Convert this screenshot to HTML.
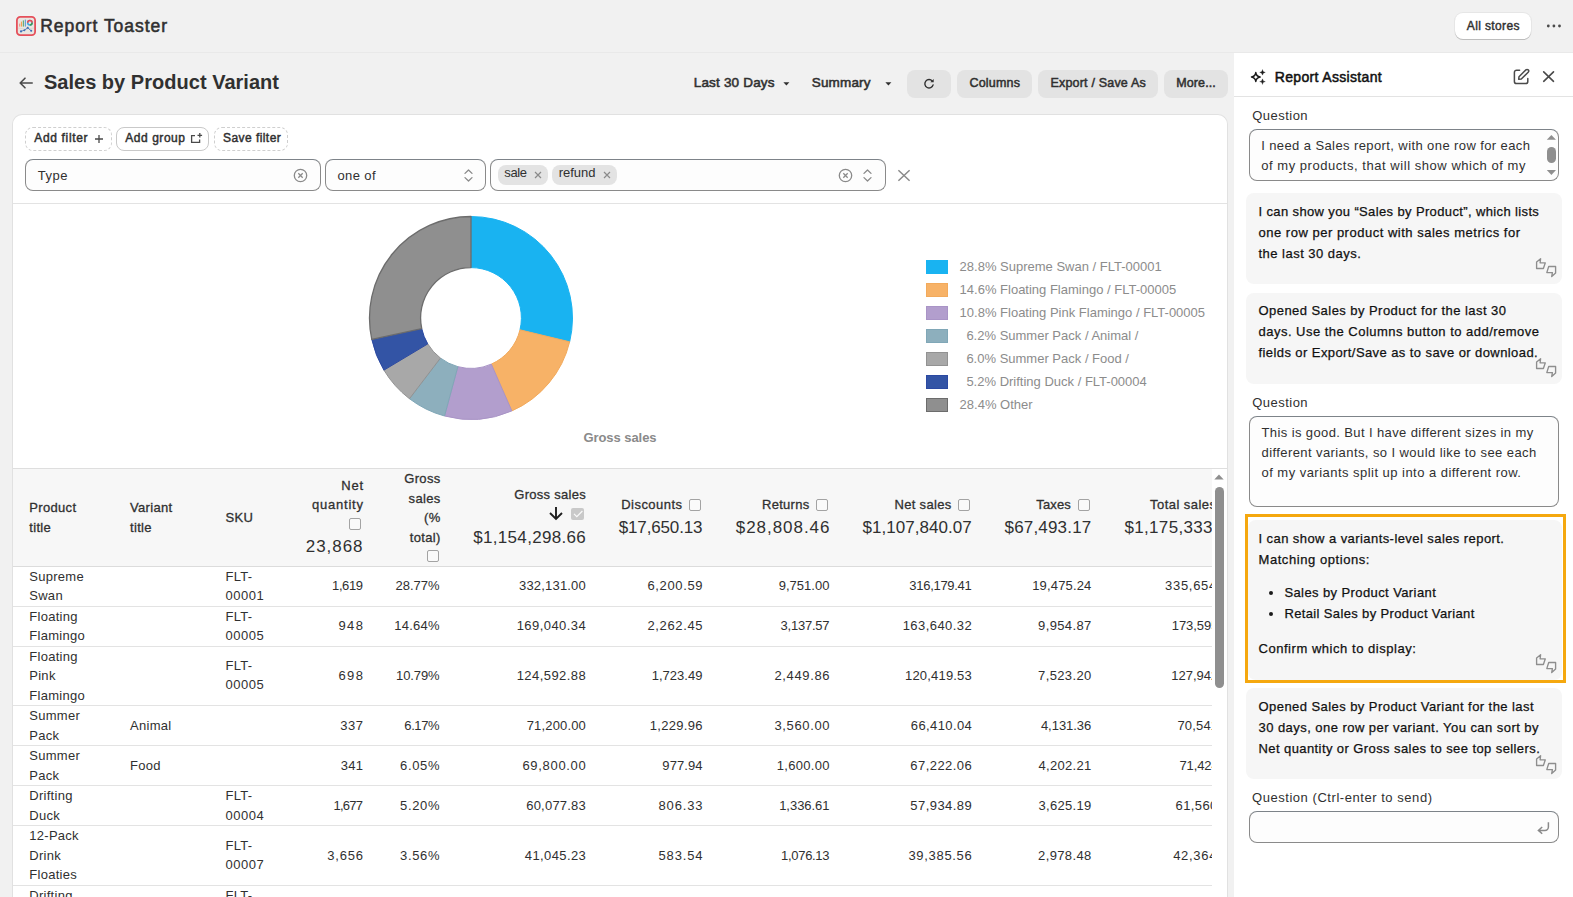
<!DOCTYPE html>
<html><head><meta charset="utf-8"><title>Report Toaster</title><style>
html,body{margin:0;padding:0;}
html{width:1573px;height:897px;overflow:hidden;}
body{width:1573px;height:897px;overflow:hidden;background:#f1f1f1;position:relative;font-family:"Liberation Sans", sans-serif;color:#303030;}
div,span,svg{position:absolute;box-sizing:border-box;}
span{white-space:pre;}
</style></head>
<body>
<div style="left:0px;top:52px;width:1573px;height:1px;background:#e9e9e9;"></div>
<svg style="left:16px;top:16px;" width="20" height="20" viewBox="0 0 20 20">
<rect x="0.9" y="0.9" width="18.2" height="18.2" rx="3.4" fill="#e9e6e1" stroke="#e5505b" stroke-width="1.8"/><path d="M2 12 Q10 14.5 18 12" fill="none" stroke="#d8d4ce" stroke-width="0.8"/>
<rect x="3.2" y="7.6" width="1" height="3" fill="#f08a80"/>
<rect x="4.9" y="5.6" width="1.1" height="5" fill="#f3a24f"/>
<rect x="6.8" y="4.4" width="1.1" height="6.2" fill="#5aa66b"/>
<rect x="8.8" y="3.6" width="1.1" height="7" fill="#5c9bd8"/>
<circle cx="13.9" cy="6.7" r="2.2" fill="none" stroke="#3aa6dd" stroke-width="1.5"/>
<path d="M11.7 6.7 A2.2 2.2 0 0 1 16.1 6.7" fill="none" stroke="#ec4b52" stroke-width="1.5"/>
<path d="M16.1 6.7 A2.2 2.2 0 0 1 13.9 8.9" fill="none" stroke="#3c9a55" stroke-width="1.5"/>
<path d="M5 15.4 L8.4 14.2 L11.7 11.8 L15.2 14.8" fill="none" stroke="#4a78b8" stroke-width="0.9"/>
<circle cx="5" cy="15.4" r="1.05" fill="#3f6fb5"/><circle cx="8.4" cy="14.2" r="0.95" fill="#3f6fb5"/>
<circle cx="11.7" cy="11.8" r="1.05" fill="#3f6fb5"/><circle cx="15.2" cy="14.8" r="1.05" fill="#3f6fb5"/>
</svg>
<span style="left:40.20px;top:16px;font-size:17.5px;line-height:20px;letter-spacing:0.949px;-webkit-text-stroke:0.55px;">Report Toaster</span>
<div style="left:1455px;top:13px;width:76px;height:26px;background:#fff;border-radius:8px;box-shadow:0 1px 0 #bdbdbd, 0 0 0 1px #e6e6e6;"></div>
<span style="left:1466.80px;top:19px;font-size:12px;line-height:14px;letter-spacing:0.371px;-webkit-text-stroke:0.42px;">All stores</span>
<svg style="left:1546.3px;top:23px;" width="17" height="6" viewBox="0 0 17 6"><circle cx="2.3" cy="3" r="1.4" fill="#4a4a4a"/><circle cx="7.9" cy="3" r="1.4" fill="#4a4a4a"/><circle cx="13.5" cy="3" r="1.4" fill="#4a4a4a"/></svg>
<svg style="left:18px;top:76px;" width="16" height="14" viewBox="0 0 16 14"><path d="M14.2 7 H2.4 M7 2.2 L2.2 7 L7 11.8" fill="none" stroke="#4a4a4a" stroke-width="1.6" stroke-linecap="round" stroke-linejoin="round"/></svg>
<span style="left:43.90px;top:71px;font-size:20px;line-height:22px;letter-spacing:0.025px;font-weight:bold;">Sales by Product Variant</span>
<span style="left:693.75px;top:75px;font-size:13.5px;line-height:15px;letter-spacing:0.178px;-webkit-text-stroke:0.55px;">Last 30 Days</span>
<svg style="left:783px;top:82px;" width="7" height="4" viewBox="0 0 7 4"><path d="M0.4 0.3 H6.4 L3.4 3.6 Z" fill="#303030"/></svg>
<span style="left:811.75px;top:75px;font-size:13.5px;line-height:15px;letter-spacing:0.164px;-webkit-text-stroke:0.55px;">Summary</span>
<svg style="left:885px;top:82px;" width="7" height="4" viewBox="0 0 7 4"><path d="M0.4 0.3 H6.4 L3.4 3.6 Z" fill="#303030"/></svg>
<div style="left:907px;top:70px;width:44px;height:28px;background:#e3e3e3;border-radius:8px;"></div>
<svg style="left:922px;top:77px;" width="14" height="14" viewBox="0 0 14 14"><path d="M10.3 4.1 A4.2 4.2 0 1 0 11.1 7.9" fill="none" stroke="#303030" stroke-width="1.4" stroke-linecap="round"/><path d="M11.7 1.9 V5.3 H8.3 Z" fill="#303030"/></svg>
<div style="left:957px;top:70px;width:75px;height:28px;background:#e3e3e3;border-radius:8px;"></div>
<span style="left:969.50px;top:76px;font-size:12.5px;line-height:14px;letter-spacing:0.195px;-webkit-text-stroke:0.5px;">Columns</span>
<div style="left:1038px;top:70px;width:120px;height:28px;background:#e3e3e3;border-radius:8px;"></div>
<span style="left:1050.50px;top:76px;font-size:12.5px;line-height:14px;letter-spacing:0.189px;-webkit-text-stroke:0.5px;">Export / Save As</span>
<div style="left:1164px;top:70px;width:64px;height:28px;background:#e3e3e3;border-radius:8px;"></div>
<span style="left:1176.25px;top:76px;font-size:12.5px;line-height:14px;letter-spacing:0.099px;-webkit-text-stroke:0.5px;">More...</span>
<div style="left:12px;top:114px;width:1216px;height:783px;background:#fff;border:1px solid #e1e1e1;border-bottom:none;border-radius:10px 10px 0 0;"></div>
<div style="left:25px;top:127px;width:87px;height:24px;border:1px dashed #cfcfcf;border-radius:8px;"></div>
<span style="left:34.30px;top:131px;font-size:12px;line-height:14px;letter-spacing:0.649px;-webkit-text-stroke:0.45px;">Add filter</span>
<svg style="left:94px;top:134px;" width="10" height="10" viewBox="0 0 10 10"><path d="M5 1 V9 M1 5 H9" stroke="#4a4a4a" stroke-width="1.3" fill="none"/></svg>
<div style="left:116px;top:127px;width:93px;height:24px;border:1px solid #c9c9c9;border-radius:8px;background:#fff;"></div>
<span style="left:125.30px;top:131px;font-size:12px;line-height:14px;letter-spacing:0.539px;-webkit-text-stroke:0.45px;">Add group</span>
<svg style="left:190px;top:132px;" width="13" height="12" viewBox="0 0 13 12"><path d="M5 3.6 H1.6 V10.4 H9.6 V7.6" fill="none" stroke="#4a4a4a" stroke-width="1.3"/><path d="M9.8 1 V5.6 M7.5 3.3 H12.1" stroke="#4a4a4a" stroke-width="1.3" fill="none"/></svg>
<div style="left:214px;top:127px;width:74px;height:24px;border:1px dashed #cfcfcf;border-radius:8px;"></div>
<span style="left:223.00px;top:131px;font-size:12px;line-height:14px;letter-spacing:0.439px;-webkit-text-stroke:0.45px;">Save filter</span>
<div style="left:25px;top:159px;width:296px;height:32px;background:#fdfdfd;border:1px solid #8a8a8a;border-top-color:#7d8389;border-radius:8px;"></div>
<span style="left:37.80px;top:168px;font-size:13px;line-height:15px;letter-spacing:0.471px;">Type</span>
<svg style="left:293px;top:168px;" width="15" height="15" viewBox="0 0 15 15"><circle cx="7.5" cy="7.5" r="6.2" fill="none" stroke="#8a8a8a" stroke-width="1.3"/><path d="M5.3 5.3 L9.7 9.7 M9.7 5.3 L5.3 9.7" stroke="#8a8a8a" stroke-width="1.3" fill="none"/></svg>
<div style="left:325px;top:159px;width:161px;height:32px;background:#fdfdfd;border:1px solid #8a8a8a;border-top-color:#7d8389;border-radius:8px;"></div>
<span style="left:337.50px;top:168px;font-size:13px;line-height:15px;letter-spacing:0.389px;">one of</span>
<svg style="left:463.5px;top:168.7px;" width="9" height="13" viewBox="0 0 9 13"><path d="M1 4.4 L4.5 1 L8 4.4 M1 8.6 L4.5 12 L8 8.6" fill="none" stroke="#8a8a8a" stroke-width="1.3" stroke-linejoin="round" stroke-linecap="round"/></svg>
<div style="left:490px;top:159px;width:396px;height:32px;background:#fdfdfd;border:1px solid #8a8a8a;border-top-color:#7d8389;border-radius:8px;"></div>
<div style="left:498px;top:165px;width:50px;height:20px;background:#e3e3e3;border-radius:8px;"></div>
<span style="left:504.30px;top:165px;font-size:13px;line-height:15px;letter-spacing:-0.386px;">sale</span>
<svg style="left:534.2px;top:171.2px;" width="8" height="8" viewBox="0 0 8 8"><path d="M1 1 L7 7 M7 1 L1 7" stroke="#8a8a8a" stroke-width="1.2" fill="none"/></svg>
<div style="left:552px;top:165px;width:65px;height:20px;background:#e3e3e3;border-radius:8px;"></div>
<span style="left:558.70px;top:165px;font-size:13px;line-height:15px;letter-spacing:-0.035px;">refund</span>
<svg style="left:603px;top:171.2px;" width="8" height="8" viewBox="0 0 8 8"><path d="M1 1 L7 7 M7 1 L1 7" stroke="#8a8a8a" stroke-width="1.2" fill="none"/></svg>
<svg style="left:838px;top:168px;" width="15" height="15" viewBox="0 0 15 15"><circle cx="7.5" cy="7.5" r="6.2" fill="none" stroke="#8a8a8a" stroke-width="1.3"/><path d="M5.3 5.3 L9.7 9.7 M9.7 5.3 L5.3 9.7" stroke="#8a8a8a" stroke-width="1.3" fill="none"/></svg>
<svg style="left:863.4px;top:168.7px;" width="9" height="13" viewBox="0 0 9 13"><path d="M1 4.4 L4.5 1 L8 4.4 M1 8.6 L4.5 12 L8 8.6" fill="none" stroke="#8a8a8a" stroke-width="1.3" stroke-linejoin="round" stroke-linecap="round"/></svg>
<svg style="left:897px;top:169px;" width="14" height="13" viewBox="0 0 14 13"><path d="M1.4 1.2 L12.6 11.8 M12.6 1.2 L1.4 11.8" stroke="#8a8a8a" stroke-width="1.5" fill="none"/></svg>
<div style="left:13px;top:203px;width:1214px;height:1px;background:#e3e3e3;"></div>
<div style="left:1234px;top:53px;width:339px;height:844px;background:#fff;"></div>
<div style="left:1234px;top:96px;width:339px;height:1px;background:#e3e3e3;"></div>
<svg style="left:360px;top:208px;" width="222" height="222" viewBox="0 0 222 222"><path d="M111.00 8.50 A101.5 101.5 0 0 1 209.67 133.82 L159.99 121.83 A50.4 50.4 0 0 0 111.00 59.60 Z" fill="#19b3f1" stroke="#19b3f1" stroke-width="1" stroke-linejoin="round"/><path d="M209.67 133.82 A101.5 101.5 0 0 1 151.84 202.92 L131.28 156.14 A50.4 50.4 0 0 0 159.99 121.83 Z" fill="#f7b267" stroke="#f2aa5c" stroke-width="1" stroke-linejoin="round"/><path d="M151.84 202.92 A101.5 101.5 0 0 1 84.52 207.99 L97.85 158.66 A50.4 50.4 0 0 0 131.28 156.14 Z" fill="#b29ecd" stroke="#a994c6" stroke-width="1" stroke-linejoin="round"/><path d="M84.52 207.99 A101.5 101.5 0 0 1 49.45 190.71 L80.44 150.07 A50.4 50.4 0 0 0 97.85 158.66 Z" fill="#8dafbd" stroke="#80a7b7" stroke-width="1" stroke-linejoin="round"/><path d="M49.45 190.71 A101.5 101.5 0 0 1 23.90 162.11 L67.75 135.87 A50.4 50.4 0 0 0 80.44 150.07 Z" fill="#a8a8a8" stroke="#929292" stroke-width="1" stroke-linejoin="round"/><path d="M23.90 162.11 A101.5 101.5 0 0 1 11.78 131.39 L61.73 120.62 A50.4 50.4 0 0 0 67.75 135.87 Z" fill="#3354a5" stroke="#2b49a2" stroke-width="1" stroke-linejoin="round"/><path d="M11.78 131.39 A101.5 101.5 0 0 1 111.00 8.50 L111.00 59.60 A50.4 50.4 0 0 0 61.73 120.62 Z" fill="#8f8f8f" stroke="#6c6c6c" stroke-width="1.3" stroke-linejoin="round"/></svg>
<span style="left:583.40px;top:430px;font-size:13px;line-height:15px;letter-spacing:-0.052px;font-weight:bold;color:#8a8a8a;">Gross sales</span>
<div style="left:925.5px;top:259.5px;width:22px;height:14.5px;background:#19b3f1;border:1px solid #19b3f1;"></div>
<span style="left:959.60px;top:259px;font-size:13px;line-height:15px;color:#8c8c8c;">28.8% Supreme Swan / FLT-00001</span>
<div style="left:925.5px;top:282.5px;width:22px;height:14.5px;background:#f7b267;border:1px solid #f2aa5c;"></div>
<span style="left:959.60px;top:282px;font-size:13px;line-height:15px;color:#8c8c8c;">14.6% Floating Flamingo / FLT-00005</span>
<div style="left:925.5px;top:305.5px;width:22px;height:14.5px;background:#b29ecd;border:1px solid #a994c6;"></div>
<span style="left:959.60px;top:305px;font-size:13px;line-height:15px;color:#8c8c8c;">10.8% Floating Pink Flamingo / FLT-00005</span>
<div style="left:925.5px;top:328.5px;width:22px;height:14.5px;background:#8dafbd;border:1px solid #80a7b7;"></div>
<span style="left:966.40px;top:328px;font-size:13px;line-height:15px;color:#8c8c8c;">6.2% Summer Pack / Animal /</span>
<div style="left:925.5px;top:351.5px;width:22px;height:14.5px;background:#a8a8a8;border:1px solid #929292;"></div>
<span style="left:966.40px;top:351px;font-size:13px;line-height:15px;color:#8c8c8c;">6.0% Summer Pack / Food /</span>
<div style="left:925.5px;top:374.5px;width:22px;height:14.5px;background:#3354a5;border:1px solid #2b49a2;"></div>
<span style="left:966.40px;top:374px;font-size:13px;line-height:15px;color:#8c8c8c;">5.2% Drifting Duck / FLT-00004</span>
<div style="left:925.5px;top:397.5px;width:22px;height:14.5px;background:#8f8f8f;border:1px solid #6c6c6c;"></div>
<span style="left:959.60px;top:397px;font-size:13px;line-height:15px;color:#8c8c8c;">28.4% Other</span>
<div style="left:13px;top:468px;width:1199px;height:429px;overflow:hidden;">
<div style="left:0px;top:0px;width:1300px;height:1px;background:#dedede;"></div>
<div style="left:0px;top:1px;width:1300px;height:97px;background:#f7f7f7;"></div>
<div style="left:0px;top:98px;width:1300px;height:1px;background:#dcdcdc;"></div>
<span style="left:16.25px;top:32px;font-size:13px;line-height:15px;letter-spacing:0.330px;-webkit-text-stroke:0.3px;">Product</span>
<span style="left:16.25px;top:52px;font-size:13px;line-height:15px;letter-spacing:0.330px;-webkit-text-stroke:0.3px;">title</span>
<span style="left:117.00px;top:32px;font-size:13px;line-height:15px;letter-spacing:0.330px;-webkit-text-stroke:0.3px;">Variant</span>
<span style="left:117.00px;top:52px;font-size:13px;line-height:15px;letter-spacing:0.330px;-webkit-text-stroke:0.3px;">title</span>
<span style="left:212.50px;top:42px;font-size:13px;line-height:15px;letter-spacing:0.300px;-webkit-text-stroke:0.3px;">SKU</span>
<span style="left:328.25px;top:10px;font-size:13px;line-height:15px;letter-spacing:0.758px;-webkit-text-stroke:0.3px;">Net</span>
<span style="left:299.00px;top:29px;font-size:13px;line-height:15px;letter-spacing:0.779px;-webkit-text-stroke:0.3px;">quantity</span>
<div style="left:336.25px;top:50px;width:12px;height:12px;border:1px solid #a3a3a3;border-radius:2px;background:#fafafa;"></div>
<span style="left:292.75px;top:69px;font-size:17px;line-height:19px;letter-spacing:0.950px;">23,868</span>
<span style="left:391.26px;top:3px;font-size:13px;line-height:15px;letter-spacing:0.330px;-webkit-text-stroke:0.3px;">Gross</span>
<span style="left:395.57px;top:23px;font-size:13px;line-height:15px;letter-spacing:0.330px;-webkit-text-stroke:0.3px;">sales</span>
<span style="left:411.03px;top:42px;font-size:13px;line-height:15px;letter-spacing:0.330px;-webkit-text-stroke:0.3px;">(%</span>
<span style="left:396.69px;top:62px;font-size:13px;line-height:15px;letter-spacing:0.330px;-webkit-text-stroke:0.3px;">total)</span>
<div style="left:413.5px;top:82.20000000000005px;width:12px;height:12px;border:1px solid #a3a3a3;border-radius:2px;background:#fafafa;"></div>
<span style="left:501.25px;top:19px;font-size:13px;line-height:15px;letter-spacing:0.286px;-webkit-text-stroke:0.3px;">Gross sales</span>
<svg style="left:535px;top:37px;" width="16" height="16" viewBox="0 0 16 16"><path d="M8 2.1 V13.6 M2 8 L8 14 L14 8" fill="none" stroke="#1f1f1f" stroke-width="1.9" stroke-linejoin="miter"/></svg>
<div style="left:558.2px;top:40px;width:12.5px;height:12px;background:#c9c9c9;border-radius:2px;"></div>
<svg style="left:558.5px;top:40px;" width="12" height="12" viewBox="0 0 12 12"><path d="M2 5.8 L4.8 8.6 L10.4 3" fill="none" stroke="#fafafa" stroke-width="1.2"/></svg>
<span style="left:460.25px;top:60px;font-size:17px;line-height:19px;letter-spacing:0.315px;">$1,154,298.66</span>
<span style="left:608.25px;top:29px;font-size:13px;line-height:15px;letter-spacing:0.459px;-webkit-text-stroke:0.3px;">Discounts</span>
<div style="left:676.25px;top:31px;width:12px;height:12px;border:1px solid #a3a3a3;border-radius:2px;background:#fafafa;"></div>
<span style="left:605.75px;top:50px;font-size:17px;line-height:19px;letter-spacing:-0.149px;">$17,650.13</span>
<span style="left:749.00px;top:29px;font-size:13px;line-height:15px;letter-spacing:0.286px;-webkit-text-stroke:0.3px;">Returns</span>
<div style="left:803.25px;top:31px;width:12px;height:12px;border:1px solid #a3a3a3;border-radius:2px;background:#fafafa;"></div>
<span style="left:722.75px;top:50px;font-size:17px;line-height:19px;letter-spacing:0.962px;">$28,808.46</span>
<span style="left:881.50px;top:29px;font-size:13px;line-height:15px;letter-spacing:0.318px;-webkit-text-stroke:0.3px;">Net sales</span>
<div style="left:945px;top:31px;width:12px;height:12px;border:1px solid #a3a3a3;border-radius:2px;background:#fafafa;"></div>
<span style="left:849.50px;top:50px;font-size:17px;line-height:19px;letter-spacing:0.044px;">$1,107,840.07</span>
<span style="left:1023.25px;top:29px;font-size:13px;line-height:15px;letter-spacing:0.133px;-webkit-text-stroke:0.3px;">Taxes</span>
<div style="left:1064.5px;top:31px;width:12px;height:12px;border:1px solid #a3a3a3;border-radius:2px;background:#fafafa;"></div>
<span style="left:991.50px;top:50px;font-size:17px;line-height:19px;letter-spacing:0.184px;">$67,493.17</span>
<span style="left:1137.10px;top:29px;font-size:13px;line-height:15px;letter-spacing:0.450px;-webkit-text-stroke:0.3px;">Total sales</span>
<div style="left:1211.5px;top:31px;width:12px;height:12px;border:1px solid #a3a3a3;border-radius:2px;background:#fafafa;"></div>
<span style="left:1111.50px;top:50px;font-size:17px;line-height:19px;letter-spacing:0.320px;">$1,175,333.24</span>
<span style="left:16.25px;top:101px;font-size:13px;line-height:15px;letter-spacing:0.280px;">Supreme</span>
<span style="left:16.25px;top:120px;font-size:13px;line-height:15px;letter-spacing:0.280px;">Swan</span>
<span style="left:212.50px;top:101px;font-size:13px;line-height:15px;letter-spacing:0.280px;">FLT-</span>
<span style="left:212.50px;top:120px;font-size:13px;line-height:15px;letter-spacing:0.550px;">00001</span>
<span style="left:319.05px;top:110px;font-size:13px;line-height:15px;letter-spacing:-0.399px;">1,619</span>
<span style="left:382.60px;top:110px;font-size:13px;line-height:15px;letter-spacing:-0.019px;">28.77%</span>
<span style="left:506.05px;top:110px;font-size:13px;line-height:15px;letter-spacing:0.180px;">332,131.00</span>
<span style="left:634.40px;top:110px;font-size:13px;line-height:15px;letter-spacing:0.642px;">6,200.59</span>
<span style="left:765.70px;top:110px;font-size:13px;line-height:15px;letter-spacing:0.027px;">9,751.00</span>
<span style="left:896.35px;top:110px;font-size:13px;line-height:15px;letter-spacing:-0.298px;">316,179.41</span>
<span style="left:1019.25px;top:110px;font-size:13px;line-height:15px;letter-spacing:0.145px;">19,475.24</span>
<span style="left:1152.00px;top:110px;font-size:13px;line-height:15px;letter-spacing:0.714px;">335,654.65</span>
<div style="left:0px;top:138px;width:1300px;height:1px;background:#e3e3e3;"></div>
<span style="left:16.25px;top:141px;font-size:13px;line-height:15px;letter-spacing:0.280px;">Floating</span>
<span style="left:16.25px;top:160px;font-size:13px;line-height:15px;letter-spacing:0.280px;">Flamingo</span>
<span style="left:212.50px;top:141px;font-size:13px;line-height:15px;letter-spacing:0.280px;">FLT-</span>
<span style="left:212.50px;top:160px;font-size:13px;line-height:15px;letter-spacing:0.550px;">00005</span>
<span style="left:325.40px;top:150px;font-size:13px;line-height:15px;letter-spacing:1.448px;">948</span>
<span style="left:381.20px;top:150px;font-size:13px;line-height:15px;letter-spacing:0.261px;">14.64%</span>
<span style="left:503.65px;top:150px;font-size:13px;line-height:15px;letter-spacing:0.447px;">169,040.34</span>
<span style="left:634.40px;top:150px;font-size:13px;line-height:15px;letter-spacing:0.642px;">2,262.45</span>
<span style="left:767.60px;top:150px;font-size:13px;line-height:15px;letter-spacing:-0.244px;">3,137.57</span>
<span style="left:889.65px;top:150px;font-size:13px;line-height:15px;letter-spacing:0.447px;">163,640.32</span>
<span style="left:1025.05px;top:150px;font-size:13px;line-height:15px;letter-spacing:0.370px;">9,954.87</span>
<span style="left:1158.70px;top:150px;font-size:13px;line-height:15px;letter-spacing:-0.031px;">173,595.19</span>
<div style="left:0px;top:178px;width:1300px;height:1px;background:#e3e3e3;"></div>
<span style="left:16.25px;top:181px;font-size:13px;line-height:15px;letter-spacing:0.280px;">Floating</span>
<span style="left:16.25px;top:200px;font-size:13px;line-height:15px;letter-spacing:0.280px;">Pink</span>
<span style="left:16.25px;top:220px;font-size:13px;line-height:15px;letter-spacing:0.280px;">Flamingo</span>
<span style="left:212.50px;top:190px;font-size:13px;line-height:15px;letter-spacing:0.280px;">FLT-</span>
<span style="left:212.50px;top:209px;font-size:13px;line-height:15px;letter-spacing:0.550px;">00005</span>
<span style="left:325.40px;top:200px;font-size:13px;line-height:15px;letter-spacing:1.448px;">698</span>
<span style="left:383.10px;top:200px;font-size:13px;line-height:15px;letter-spacing:-0.119px;">10.79%</span>
<span style="left:503.65px;top:200px;font-size:13px;line-height:15px;letter-spacing:0.447px;">124,592.88</span>
<span style="left:638.70px;top:200px;font-size:13px;line-height:15px;letter-spacing:0.027px;">1,723.49</span>
<span style="left:761.40px;top:200px;font-size:13px;line-height:15px;letter-spacing:0.642px;">2,449.86</span>
<span style="left:892.05px;top:200px;font-size:13px;line-height:15px;letter-spacing:0.180px;">120,419.53</span>
<span style="left:1025.05px;top:200px;font-size:13px;line-height:15px;letter-spacing:0.370px;">7,523.20</span>
<span style="left:1158.20px;top:200px;font-size:13px;line-height:15px;letter-spacing:0.025px;">127,942.73</span>
<div style="left:0px;top:237px;width:1300px;height:1px;background:#e3e3e3;"></div>
<span style="left:16.25px;top:240px;font-size:13px;line-height:15px;letter-spacing:0.280px;">Summer</span>
<span style="left:16.25px;top:260px;font-size:13px;line-height:15px;letter-spacing:0.280px;">Pack</span>
<span style="left:117.00px;top:250px;font-size:13px;line-height:15px;letter-spacing:0.280px;">Animal</span>
<span style="left:327.30px;top:250px;font-size:13px;line-height:15px;letter-spacing:0.498px;">337</span>
<span style="left:391.30px;top:250px;font-size:13px;line-height:15px;letter-spacing:-0.394px;">6.17%</span>
<span style="left:513.75px;top:250px;font-size:13px;line-height:15px;letter-spacing:0.145px;">71,200.00</span>
<span style="left:636.80px;top:250px;font-size:13px;line-height:15px;letter-spacing:0.299px;">1,229.96</span>
<span style="left:761.40px;top:250px;font-size:13px;line-height:15px;letter-spacing:0.642px;">3,560.00</span>
<span style="left:897.85px;top:250px;font-size:13px;line-height:15px;letter-spacing:0.382px;">66,410.04</span>
<span style="left:1027.95px;top:250px;font-size:13px;line-height:15px;letter-spacing:-0.044px;">4,131.36</span>
<span style="left:1164.50px;top:250px;font-size:13px;line-height:15px;letter-spacing:0.145px;">70,541.40</span>
<div style="left:0px;top:277px;width:1300px;height:1px;background:#e3e3e3;"></div>
<span style="left:16.25px;top:280px;font-size:13px;line-height:15px;letter-spacing:0.280px;">Summer</span>
<span style="left:16.25px;top:300px;font-size:13px;line-height:15px;letter-spacing:0.280px;">Pack</span>
<span style="left:117.00px;top:290px;font-size:13px;line-height:15px;letter-spacing:0.280px;">Food</span>
<span style="left:327.80px;top:290px;font-size:13px;line-height:15px;letter-spacing:0.248px;">341</span>
<span style="left:387.00px;top:290px;font-size:13px;line-height:15px;letter-spacing:0.681px;">6.05%</span>
<span style="left:509.45px;top:290px;font-size:13px;line-height:15px;letter-spacing:0.682px;">69,800.00</span>
<span style="left:649.35px;top:290px;font-size:13px;line-height:15px;letter-spacing:0.077px;">977.94</span>
<span style="left:763.80px;top:290px;font-size:13px;line-height:15px;letter-spacing:0.299px;">1,600.00</span>
<span style="left:897.35px;top:290px;font-size:13px;line-height:15px;letter-spacing:0.445px;">67,222.06</span>
<span style="left:1025.55px;top:290px;font-size:13px;line-height:15px;letter-spacing:0.299px;">4,202.21</span>
<span style="left:1166.40px;top:290px;font-size:13px;line-height:15px;letter-spacing:-0.093px;">71,424.27</span>
<div style="left:0px;top:317px;width:1300px;height:1px;background:#e3e3e3;"></div>
<span style="left:16.25px;top:320px;font-size:13px;line-height:15px;letter-spacing:0.280px;">Drifting</span>
<span style="left:16.25px;top:340px;font-size:13px;line-height:15px;letter-spacing:0.280px;">Duck</span>
<span style="left:212.50px;top:320px;font-size:13px;line-height:15px;letter-spacing:0.280px;">FLT-</span>
<span style="left:212.50px;top:340px;font-size:13px;line-height:15px;letter-spacing:0.550px;">00004</span>
<span style="left:320.45px;top:330px;font-size:13px;line-height:15px;letter-spacing:-0.749px;">1,677</span>
<span style="left:387.00px;top:330px;font-size:13px;line-height:15px;letter-spacing:0.681px;">5.20%</span>
<span style="left:513.25px;top:330px;font-size:13px;line-height:15px;letter-spacing:0.207px;">60,077.83</span>
<span style="left:645.55px;top:330px;font-size:13px;line-height:15px;letter-spacing:0.837px;">806.33</span>
<span style="left:766.20px;top:330px;font-size:13px;line-height:15px;letter-spacing:-0.044px;">1,336.61</span>
<span style="left:897.35px;top:330px;font-size:13px;line-height:15px;letter-spacing:0.445px;">57,934.89</span>
<span style="left:1025.55px;top:330px;font-size:13px;line-height:15px;letter-spacing:0.299px;">3,625.19</span>
<span style="left:1162.60px;top:330px;font-size:13px;line-height:15px;letter-spacing:0.382px;">61,560.08</span>
<div style="left:0px;top:357px;width:1300px;height:1px;background:#e3e3e3;"></div>
<span style="left:16.25px;top:360px;font-size:13px;line-height:15px;letter-spacing:0.280px;">12-Pack</span>
<span style="left:16.25px;top:380px;font-size:13px;line-height:15px;letter-spacing:0.280px;">Drink</span>
<span style="left:16.25px;top:399px;font-size:13px;line-height:15px;letter-spacing:0.280px;">Floaties</span>
<span style="left:212.50px;top:370px;font-size:13px;line-height:15px;letter-spacing:0.280px;">FLT-</span>
<span style="left:212.50px;top:389px;font-size:13px;line-height:15px;letter-spacing:0.550px;">00007</span>
<span style="left:314.25px;top:380px;font-size:13px;line-height:15px;letter-spacing:0.801px;">3,656</span>
<span style="left:387.00px;top:380px;font-size:13px;line-height:15px;letter-spacing:0.681px;">3.56%</span>
<span style="left:511.85px;top:380px;font-size:13px;line-height:15px;letter-spacing:0.382px;">41,045.23</span>
<span style="left:645.55px;top:380px;font-size:13px;line-height:15px;letter-spacing:0.837px;">583.54</span>
<span style="left:768.10px;top:380px;font-size:13px;line-height:15px;letter-spacing:-0.316px;">1,076.13</span>
<span style="left:895.45px;top:380px;font-size:13px;line-height:15px;letter-spacing:0.682px;">39,385.56</span>
<span style="left:1025.05px;top:380px;font-size:13px;line-height:15px;letter-spacing:0.370px;">2,978.48</span>
<span style="left:1160.20px;top:380px;font-size:13px;line-height:15px;letter-spacing:0.682px;">42,364.04</span>
<div style="left:0px;top:417px;width:1300px;height:1px;background:#e3e3e3;"></div>
<span style="left:16.25px;top:420px;font-size:13px;line-height:15px;letter-spacing:0.280px;">Drifting</span>
<span style="left:16.25px;top:440px;font-size:13px;line-height:15px;letter-spacing:0.280px;">Duck</span>
<span style="left:212.50px;top:420px;font-size:13px;line-height:15px;letter-spacing:0.280px;">FLT-</span>
<span style="left:212.50px;top:440px;font-size:13px;line-height:15px;letter-spacing:0.550px;">00002</span>
<span style="left:319.05px;top:430px;font-size:13px;line-height:15px;letter-spacing:-0.157px;">2,114</span>
<span style="left:389.40px;top:430px;font-size:13px;line-height:15px;letter-spacing:0.081px;">3.12%</span>
<span style="left:511.85px;top:430px;font-size:13px;line-height:15px;letter-spacing:0.382px;">36,014.40</span>
<span style="left:647.95px;top:430px;font-size:13px;line-height:15px;letter-spacing:0.357px;">402.18</span>
<span style="left:772.55px;top:430px;font-size:13px;line-height:15px;letter-spacing:0.837px;">988.20</span>
<span style="left:895.45px;top:430px;font-size:13px;line-height:15px;letter-spacing:0.682px;">34,624.02</span>
<span style="left:1031.75px;top:430px;font-size:13px;line-height:15px;letter-spacing:-0.587px;">2,101.77</span>
<span style="left:1164.00px;top:430px;font-size:13px;line-height:15px;letter-spacing:0.207px;">36,725.79</span>
<div style="left:0px;top:457px;width:1300px;height:1px;background:#e3e3e3;"></div>
</div>
<svg style="left:1213.4px;top:473px;" width="12" height="8" viewBox="0 0 12 8"><path d="M1.3 6.4 L6 1.4 L10.7 6.4 Z" fill="#8f8f8f"/></svg>
<div style="left:1212px;top:468px;width:15px;height:1px;background:#dedede;"></div>
<div style="left:1215.3px;top:486.5px;width:8.7px;height:201px;background:#8f8f8f;border-radius:4.5px;"></div>
<svg style="left:1249px;top:69px;" width="18" height="16" viewBox="0 0 18 16">
<path d="M6.8 3.6 C7.2 6.2 8.4 7.5 11.1 8 C8.4 8.5 7.2 9.8 6.8 12.4 C6.4 9.8 5.2 8.5 2.5 8 C5.2 7.5 6.4 6.2 6.8 3.6 Z" fill="none" stroke="#1a1a1a" stroke-width="1.5" stroke-linejoin="round"/>
<path d="M13.5 0.7 C13.7 2.4 14.5 3.2 16.2 3.4 C14.5 3.6 13.7 4.4 13.5 6.1 C13.3 4.4 12.5 3.6 10.8 3.4 C12.5 3.2 13.3 2.4 13.5 0.7 Z" fill="#1a1a1a" stroke="#1a1a1a" stroke-width="0.5" stroke-linejoin="round"/>
<path d="M13.5 9.9 C13.7 11.6 14.5 12.4 16.2 12.6 C14.5 12.8 13.7 13.6 13.5 15.3 C13.3 13.6 12.5 12.8 10.8 12.6 C12.5 12.4 13.3 11.6 13.5 9.9 Z" fill="#1a1a1a" stroke="#1a1a1a" stroke-width="0.5" stroke-linejoin="round"/>
</svg>
<span style="left:1274.70px;top:69px;font-size:14px;line-height:16px;letter-spacing:0.341px;color:#111111;-webkit-text-stroke:0.5px;">Report Assistant</span>
<svg style="left:1512px;top:67px;" width="19" height="19" viewBox="0 0 19 19">
<path d="M7.6 3.2 H4.6 A2.2 2.2 0 0 0 2.4 5.4 V14.4 A2.2 2.2 0 0 0 4.6 16.6 H13.6 A2.2 2.2 0 0 0 15.8 14.4 V11.4" fill="none" stroke="#4a4a4a" stroke-width="1.5" stroke-linecap="round"/>
<path d="M13.9 2.9 L7 9.7 L6.7 12.3 L9.3 12 L16.2 5.2 A1.6 1.6 0 0 0 13.9 2.9 Z" fill="none" stroke="#4a4a4a" stroke-width="1.5" stroke-linejoin="round"/>
</svg>
<svg style="left:1542px;top:70px;" width="14" height="14" viewBox="0 0 14 14"><path d="M1.7 1.9 L11.5 11.3 M11.5 1.9 L1.7 11.3" stroke="#4a4a4a" stroke-width="1.6" stroke-linecap="round" fill="none"/></svg>
<span style="left:1252.30px;top:108px;font-size:13px;line-height:15px;letter-spacing:0.465px;">Question</span>
<div style="left:1249px;top:129px;width:310px;height:52px;background:#fdfdfd;border:1px solid #8a8a8a;border-top-color:#7d8389;border-radius:8px;"></div>
<span style="left:1261.20px;top:138px;font-size:13px;line-height:15px;letter-spacing:0.403px;">I need a Sales report, with one row for each</span>
<span style="left:1261.20px;top:158px;font-size:13px;line-height:15px;letter-spacing:0.543px;">of my products, that will show which of my</span>
<svg style="left:1546px;top:134px;" width="11" height="7" viewBox="0 0 11 7"><path d="M0.8 5.8 L5.4 0.9 L10 5.8 Z" fill="#8f8f8f"/></svg>
<div style="left:1547px;top:147px;width:9px;height:16px;background:#8f8f8f;border-radius:4.5px;"></div>
<svg style="left:1546px;top:168.5px;" width="11" height="7" viewBox="0 0 11 7"><path d="M0.8 1 L5.4 5.9 L10 1 Z" fill="#8f8f8f"/></svg>
<div style="left:1246px;top:193.3px;width:316.4px;height:90.3px;background:#f6f6f6;border-radius:8px;"></div>
<span style="left:1258.50px;top:204px;font-size:13px;line-height:15px;letter-spacing:0.370px;color:#111111;-webkit-text-stroke:0.25px;">I can show you “Sales by Product”, which lists</span>
<span style="left:1258.50px;top:225px;font-size:13px;line-height:15px;letter-spacing:0.510px;color:#111111;-webkit-text-stroke:0.25px;">one row per product with sales metrics for</span>
<span style="left:1258.50px;top:246px;font-size:13px;line-height:15px;letter-spacing:0.477px;color:#111111;-webkit-text-stroke:0.25px;">the last 30 days.</span>
<svg style="left:1534.8px;top:256.8px;" width="24" height="22" viewBox="0 0 24 22">
<path d="M1.6 5 L5.6 1.7 L5.1 5.8 H10.3 L8.4 11.5 H1.6 Z" fill="none" stroke="#8e8e8e" stroke-width="1.35" stroke-linejoin="round"/>
<path d="M13.7 9.5 H20.6 V16 L16.7 19.5 L17.4 15.6 H11.8 Z" fill="none" stroke="#8e8e8e" stroke-width="1.35" stroke-linejoin="round"/>
</svg>
<div style="left:1246px;top:292.6px;width:316.4px;height:91px;background:#f6f6f6;border-radius:8px;"></div>
<span style="left:1258.50px;top:303px;font-size:13px;line-height:15px;letter-spacing:0.447px;color:#111111;-webkit-text-stroke:0.25px;">Opened Sales by Product for the last 30</span>
<span style="left:1258.50px;top:324px;font-size:13px;line-height:15px;letter-spacing:0.479px;color:#111111;-webkit-text-stroke:0.25px;">days. Use the Columns button to add/remove</span>
<span style="left:1258.50px;top:345px;font-size:13px;line-height:15px;letter-spacing:0.416px;color:#111111;-webkit-text-stroke:0.25px;">fields or Export/Save as to save or download.</span>
<svg style="left:1534.8px;top:356.5px;" width="24" height="22" viewBox="0 0 24 22">
<path d="M1.6 5 L5.6 1.7 L5.1 5.8 H10.3 L8.4 11.5 H1.6 Z" fill="none" stroke="#8e8e8e" stroke-width="1.35" stroke-linejoin="round"/>
<path d="M13.7 9.5 H20.6 V16 L16.7 19.5 L17.4 15.6 H11.8 Z" fill="none" stroke="#8e8e8e" stroke-width="1.35" stroke-linejoin="round"/>
</svg>
<span style="left:1252.30px;top:395px;font-size:13px;line-height:15px;letter-spacing:0.465px;">Question</span>
<div style="left:1249px;top:416px;width:310px;height:91px;background:#fdfdfd;border:1px solid #8a8a8a;border-top-color:#7d8389;border-radius:8px;"></div>
<span style="left:1261.50px;top:425px;font-size:13px;line-height:15px;letter-spacing:0.391px;">This is good. But I have different sizes in my</span>
<span style="left:1261.50px;top:445px;font-size:13px;line-height:15px;letter-spacing:0.416px;">different variants, so I would like to see each</span>
<span style="left:1261.50px;top:465px;font-size:13px;line-height:15px;letter-spacing:0.467px;">of my variants split up into a different row.</span>
<div style="left:1245px;top:514px;width:320.6px;height:168.5px;border:3px solid #f5a80f;background:#fff;"></div>
<div style="left:1248.3px;top:519.5px;width:313.8px;height:160px;background:#f6f6f6;border-radius:8px;"></div>
<span style="left:1258.50px;top:531px;font-size:13px;line-height:15px;letter-spacing:0.429px;color:#111111;-webkit-text-stroke:0.25px;">I can show a variants-level sales report.</span>
<span style="left:1258.50px;top:552px;font-size:13px;line-height:15px;letter-spacing:0.562px;color:#111111;-webkit-text-stroke:0.25px;">Matching options:</span>
<div style="left:1268.6px;top:590.6px;width:4.8px;height:4.8px;background:#1a1a1a;border-radius:50%;"></div>
<span style="left:1284.40px;top:585px;font-size:13px;line-height:15px;letter-spacing:0.403px;color:#111111;-webkit-text-stroke:0.25px;">Sales by Product Variant</span>
<div style="left:1268.6px;top:611.6px;width:4.8px;height:4.8px;background:#1a1a1a;border-radius:50%;"></div>
<span style="left:1284.40px;top:606px;font-size:13px;line-height:15px;letter-spacing:0.364px;color:#111111;-webkit-text-stroke:0.25px;">Retail Sales by Product Variant</span>
<span style="left:1258.50px;top:641px;font-size:13px;line-height:15px;letter-spacing:0.538px;color:#111111;-webkit-text-stroke:0.25px;">Confirm which to display:</span>
<svg style="left:1534.8px;top:653px;" width="24" height="22" viewBox="0 0 24 22">
<path d="M1.6 5 L5.6 1.7 L5.1 5.8 H10.3 L8.4 11.5 H1.6 Z" fill="none" stroke="#8e8e8e" stroke-width="1.35" stroke-linejoin="round"/>
<path d="M13.7 9.5 H20.6 V16 L16.7 19.5 L17.4 15.6 H11.8 Z" fill="none" stroke="#8e8e8e" stroke-width="1.35" stroke-linejoin="round"/>
</svg>
<div style="left:1246px;top:688px;width:316.4px;height:91px;background:#f6f6f6;border-radius:8px;"></div>
<span style="left:1258.50px;top:699px;font-size:13px;line-height:15px;letter-spacing:0.437px;color:#111111;-webkit-text-stroke:0.25px;">Opened Sales by Product Variant for the last</span>
<span style="left:1258.50px;top:720px;font-size:13px;line-height:15px;letter-spacing:0.451px;color:#111111;-webkit-text-stroke:0.25px;">30 days, one row per variant. You can sort by</span>
<span style="left:1258.50px;top:741px;font-size:13px;line-height:15px;letter-spacing:0.413px;color:#111111;-webkit-text-stroke:0.25px;">Net quantity or Gross sales to see top sellers.</span>
<svg style="left:1534.8px;top:754px;" width="24" height="22" viewBox="0 0 24 22">
<path d="M1.6 5 L5.6 1.7 L5.1 5.8 H10.3 L8.4 11.5 H1.6 Z" fill="none" stroke="#8e8e8e" stroke-width="1.35" stroke-linejoin="round"/>
<path d="M13.7 9.5 H20.6 V16 L16.7 19.5 L17.4 15.6 H11.8 Z" fill="none" stroke="#8e8e8e" stroke-width="1.35" stroke-linejoin="round"/>
</svg>
<span style="left:1252.00px;top:790px;font-size:13px;line-height:15px;letter-spacing:0.545px;">Question (Ctrl-enter to send)</span>
<div style="left:1249px;top:811px;width:310px;height:32px;background:#fdfdfd;border:1px solid #8a8a8a;border-top-color:#7d8389;border-radius:8px;"></div>
<svg style="left:1536px;top:820px;" width="16" height="16" viewBox="0 0 16 16"><path d="M12.4 2.3 V7 A3.4 3.4 0 0 1 9 10.4 H2.6 M6.2 7 L2.4 10.4 L6.2 13.8" fill="none" stroke="#8a8a8a" stroke-width="1.5" stroke-linejoin="miter"/></svg>
</body></html>
